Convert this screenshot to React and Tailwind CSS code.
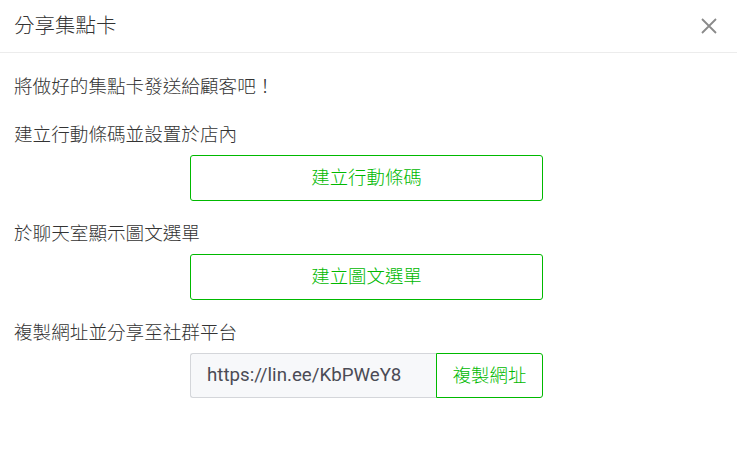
import React from 'react';

const font = { fontFamily: 'Roboto, "Noto Sans CJK TC", sans-serif' };

function CloseIcon() {
  return (
    <svg width="18" height="18" viewBox="0 0 18 18" fill="none">
      <path d="M2 2L16 16M16 2L2 16" stroke="#8a8a8a" strokeWidth="1.8" />
    </svg>
  );
}

function Section({ label, children }) {
  return (
    <div className="mt-[21px] first:mt-0">
      <p className="text-[18.6px] leading-6 text-[#333] font-light">{label}</p>
      <div className="mt-2 ml-[176px] w-[353px]">{children}</div>
    </div>
  );
}

export default function App() {
  return (
    <div className="w-[737px] h-[461px] bg-white" style={font}>
      {/* header */}
      <div className="flex items-center justify-between h-[53px] border-b border-[#ececec] pl-[14px] pr-[19px]">
        <h2 className="text-[20.5px] leading-7 text-[#333] font-light pb-[1px]">分享集點卡</h2>
        <button className="flex items-center justify-center">
          <CloseIcon />
        </button>
      </div>

      {/* body */}
      <div className="px-[14px] pt-[22px]">
        <p className="text-[18.6px] leading-6 text-[#333] font-light mb-6">將做好的集點卡發送給顧客吧！</p>

        <Section label="建立行動條碼並設置於店內">
          <button className="w-full h-[46px] border border-[#00b900] rounded-[3px] text-[18.4px] font-light text-[#00b900]">
            建立行動條碼
          </button>
        </Section>

        <Section label="於聊天室顯示圖文選單">
          <button className="w-full h-[46px] border border-[#00b900] rounded-[3px] text-[18.4px] font-light text-[#00b900]">
            建立圖文選單
          </button>
        </Section>

        <Section label="複製網址並分享至社群平台">
          <div className="flex h-[45px]">
            <div className="flex items-center w-[246px] bg-[#f7f8fa] border border-r-0 border-[#d4d6da] rounded-l-[3px] pl-4 text-[18.7px] text-[#4b4b55]">
              https://lin.ee/KbPWeY8
            </div>
            <button className="flex-1 border border-[#00b900] rounded-r-[3px] text-[18.4px] font-light text-[#00b900]">
              複製網址
            </button>
          </div>
        </Section>
      </div>
    </div>
  );
}
